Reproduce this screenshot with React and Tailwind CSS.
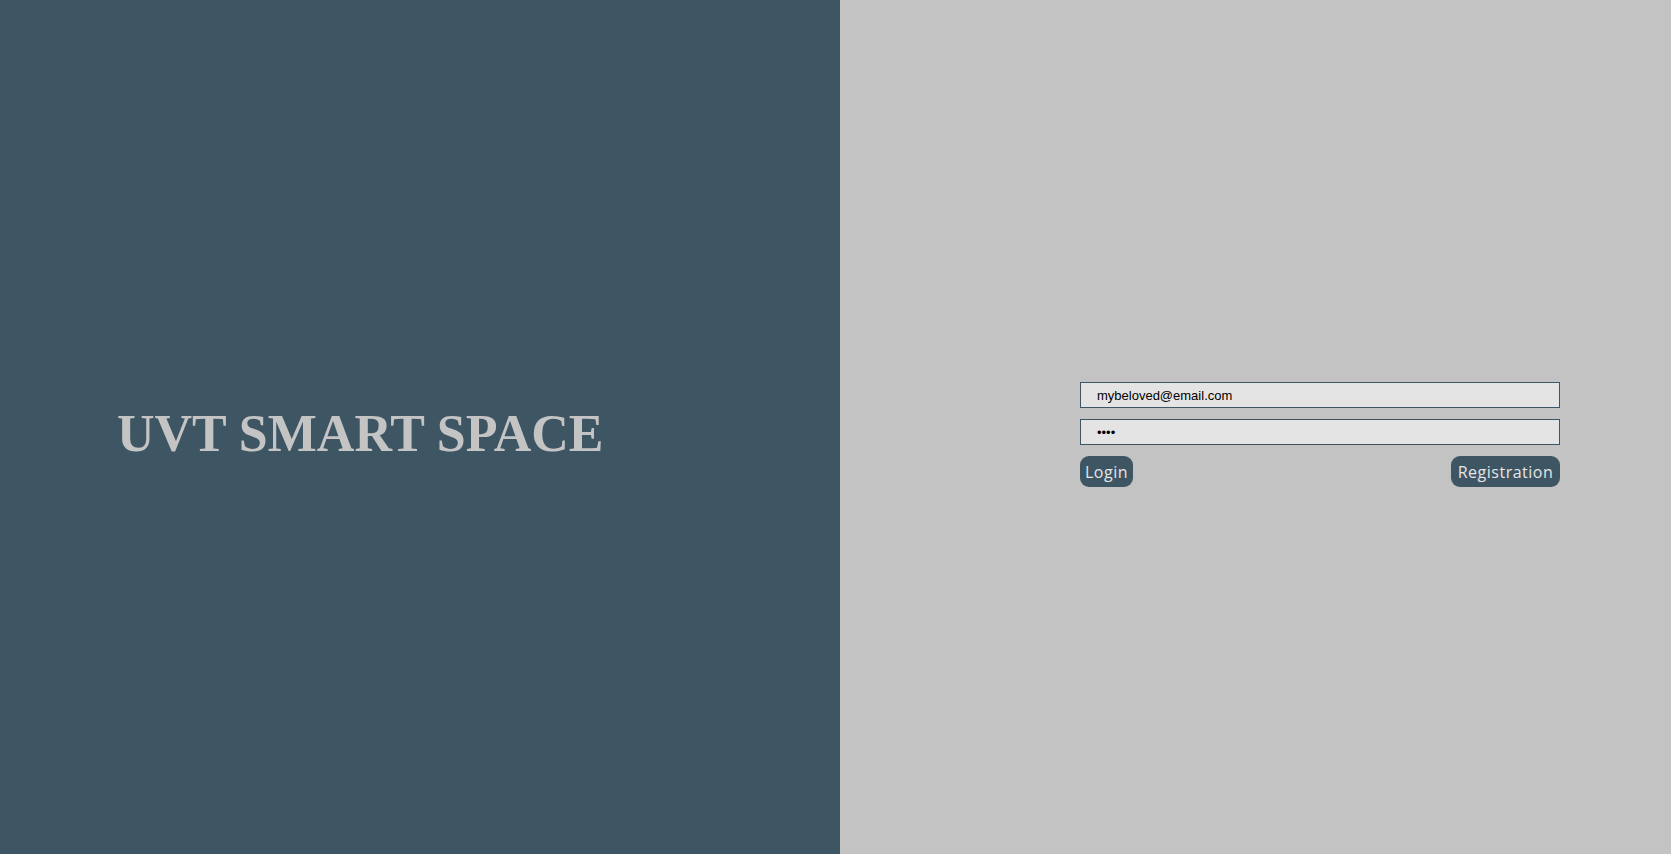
export default function App() {
  return (
    <div className="flex h-[854px] w-full">
      <div className="flex w-[840px] shrink-0 items-center bg-[#3e5563] pl-[117px] pt-[14px]">
        <h1 className="text-[52px] font-bold leading-none text-[#c4c4c4] [font-family:'Liberation_Serif',serif]">
          UVT SMART SPACE
        </h1>
      </div>
      <div className="flex flex-1 items-center bg-[#c3c3c3] pl-[240px] pt-[15px]">
        <form className="flex w-[480px] flex-col gap-[11px]">
          <input
            type="email"
            defaultValue="mybeloved@email.com"
            className="h-[26px] border border-[#3e5563] bg-[#e4e4e4] px-4 text-[13px] text-black outline-none [font-family:'Liberation_Sans',sans-serif]"
          />
          <input
            type="password"
            defaultValue="1234"
            className="h-[26px] border border-[#3e5563] bg-[#e4e4e4] px-4 text-[13px] text-black outline-none [font-family:'Liberation_Sans',sans-serif]"
          />
          <div className="flex justify-between">
            <button
              type="button"
              className="h-[31px] w-[53px] rounded-[9px] bg-[#3e5563] text-[16px] font-medium tracking-[0.5px] text-[#e6e6e6] [font-family:'Comic_Sans_MS','Open_Sans',sans-serif]"
            >
              Login
            </button>
            <button
              type="button"
              className="h-[31px] w-[109px] rounded-[9px] bg-[#3e5563] text-[16px] font-medium tracking-[0.5px] text-[#e6e6e6] [font-family:'Comic_Sans_MS','Open_Sans',sans-serif]"
            >
              Registration
            </button>
          </div>
        </form>
      </div>
    </div>
  );
}
